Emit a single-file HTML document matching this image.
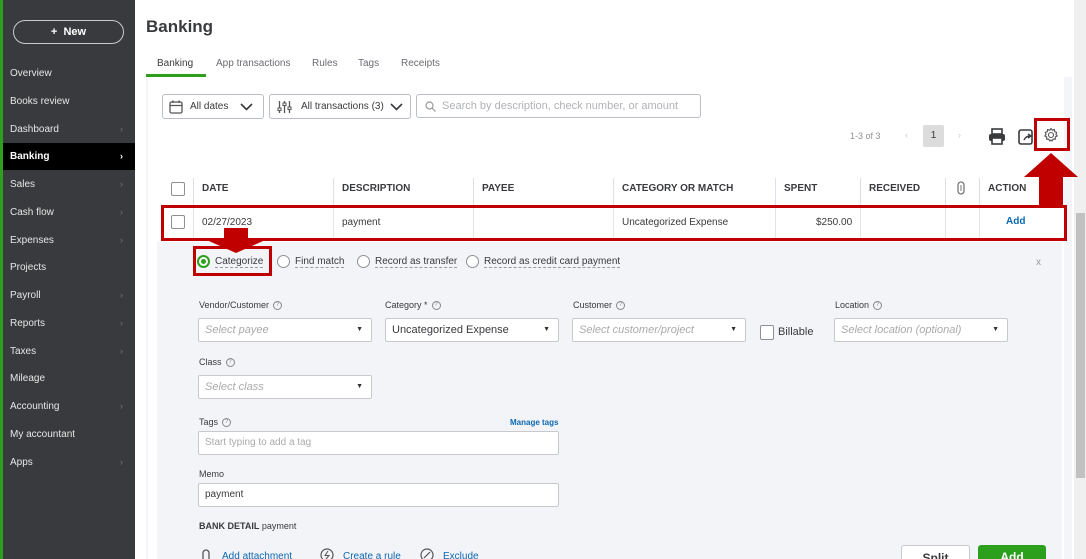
<!DOCTYPE html>
<html><head><meta charset="utf-8"><style>
*{box-sizing:border-box;margin:0;padding:0}
html,body{width:1086px;height:559px;overflow:hidden}
body{font-family:"Liberation Sans",sans-serif;background:#fff;position:relative;color:#393a3d}
.abs{position:absolute}
#side{left:0;top:0;width:135px;height:559px;background:#393a3d;border-left:3px solid #2ca01c}
#side .new{position:absolute;left:10px;top:20px;width:111px;height:24px;border:1px solid #c9cacc;border-radius:14px;color:#fff;font-size:11px;font-weight:bold;text-align:center;line-height:22px}
.nav{position:absolute;left:0;width:132px;height:27px;line-height:27px;padding-left:7px;font-size:10px;color:#e6e6e6}
.nav .ch{position:absolute;right:12px;top:0;color:#777;font-size:9px}
.nav.act{background:#000;color:#fff;font-weight:bold}
.nav.act .ch{color:#fff}
.t{position:absolute;white-space:nowrap}
.box{position:absolute;border:1px solid #babec5;border-radius:3px;background:#fff}
.lbl{font-size:9px;color:#393a3d}
.q{display:inline-block;width:9px;height:9px;border:1px solid #888;border-radius:50%;font-size:6px;text-align:center;line-height:7px;color:#888;margin-left:4px;vertical-align:middle}
.inp{position:absolute;height:24px;background:#fff;border:1px solid #c7c9cd;border-radius:2px;font-size:11px;line-height:22px;padding-left:6px}
.ph{color:#aaa;font-style:italic}
.dd{position:absolute;right:8px;top:0;font-size:7px;color:#333}
.red{position:absolute;border:3px solid #c00000}
.radio{display:inline-block;width:13px;height:13px;border:1px solid #8d9096;border-radius:50%;background:#fff;vertical-align:middle;margin-right:5px}
.rl{font-size:10px;color:#393a3d;border-bottom:1px dashed #999;vertical-align:middle}
.th{position:absolute;top:178px;height:28px;line-height:22px;font-size:10px;font-weight:bold;color:#393a3d;padding-left:8px;border-left:1px solid #dde}
</style></head><body>
<div id="side" class="abs">
<div class="new">+&nbsp; New</div>
<div class="nav" style="top:60px">Overview</div>
<div class="nav" style="top:88px">Books review</div>
<div class="nav" style="top:116px">Dashboard<span class="ch">›</span></div>
<div class="nav act" style="top:143px">Banking<span class="ch">›</span></div>
<div class="nav" style="top:171px">Sales<span class="ch">›</span></div>
<div class="nav" style="top:199px">Cash flow<span class="ch">›</span></div>
<div class="nav" style="top:227px">Expenses<span class="ch">›</span></div>
<div class="nav" style="top:254px">Projects</div>
<div class="nav" style="top:282px">Payroll<span class="ch">›</span></div>
<div class="nav" style="top:310px">Reports<span class="ch">›</span></div>
<div class="nav" style="top:338px">Taxes<span class="ch">›</span></div>
<div class="nav" style="top:365px">Mileage</div>
<div class="nav" style="top:393px">Accounting<span class="ch">›</span></div>
<div class="nav" style="top:421px">My accountant</div>
<div class="nav" style="top:449px">Apps<span class="ch">›</span></div>
</div>

<div class="t" style="left:146px;top:17px;font-size:17px;font-weight:bold;color:#393a3d">Banking</div>
<div class="t" style="left:157px;top:58px;font-size:10px;color:#393a3d">Banking</div>
<div class="abs" style="left:146px;top:74px;width:60px;height:3px;background:#2ca01c"></div>
<div class="t" style="left:216px;top:58px;font-size:10px;color:#6b6c72">App transactions</div>
<div class="t" style="left:312px;top:58px;font-size:10px;color:#6b6c72">Rules</div>
<div class="t" style="left:358px;top:58px;font-size:10px;color:#6b6c72">Tags</div>
<div class="t" style="left:401px;top:58px;font-size:10px;color:#6b6c72">Receipts</div>
<div class="abs" style="left:146px;top:77px;width:926px;height:482px;background:#f4f5f8"></div>
<div class="abs" style="left:148px;top:77px;width:916px;height:482px;background:#fff"></div>

<div class="box" style="left:162px;top:94px;width:102px;height:25px">
<svg class="abs" style="left:6px;top:5px" width="14" height="14" viewBox="0 0 14 14"><rect x="1" y="2" width="12" height="11" rx="1.5" fill="none" stroke="#555" stroke-width="1.3"/><path d="M1 5.5H13M4 0.5V3M10 0.5V3" stroke="#555" stroke-width="1.3"/></svg>
<span class="t" style="left:27px;top:6px;font-size:10px">All dates</span>
<svg class="abs" style="left:77px;top:8px" width="13" height="8"><path d="M1 1L6.5 6.5L12 1" fill="none" stroke="#393a3d" stroke-width="1.6"/></svg></div>
<div class="box" style="left:269px;top:94px;width:142px;height:25px">
<svg class="abs" style="left:7px;top:5px" width="15" height="14" viewBox="0 0 15 14"><path d="M2.5 1V13M7.5 1V13M12.5 1V13" stroke="#555" stroke-width="1.3"/><rect x="1" y="8" width="3" height="2.5" fill="#fff" stroke="#555"/><rect x="6" y="3" width="3" height="2.5" fill="#fff" stroke="#555"/><rect x="11" y="7" width="3" height="2.5" fill="#fff" stroke="#555"/></svg>
<span class="t" style="left:31px;top:6px;font-size:10px">All transactions (3)</span>
<svg class="abs" style="left:120px;top:8px" width="13" height="8"><path d="M1 1L6.5 6.5L12 1" fill="none" stroke="#393a3d" stroke-width="1.6"/></svg></div>
<div class="box" style="left:416px;top:94px;width:285px;height:24px">
<svg class="abs" style="left:8px;top:6px" width="11" height="11"><circle cx="4.5" cy="4.5" r="3.5" fill="none" stroke="#999" stroke-width="1.2"/><path d="M7 7L10.5 10.5" stroke="#999" stroke-width="1.2"/></svg>
<span class="t" style="left:25px;top:5px;font-size:11px;color:#b0b2b6">Search by description, check number, or amount</span></div>

<div class="t" style="left:850px;top:131px;font-size:9px;color:#8d9096">1-3 of 3</div>
<div class="t" style="left:905px;top:130px;font-size:9px;color:#ccc">‹</div>
<div class="abs" style="left:923px;top:125px;width:21px;height:22px;background:#dcdcdc;border-radius:2px;font-size:10px;text-align:center;line-height:22px">1</div>
<div class="t" style="left:958px;top:130px;font-size:9px;color:#ccc">›</div>
<svg class="abs" style="left:988px;top:128px" width="18" height="17" viewBox="0 0 18 17"><rect x="4" y="1" width="10" height="5" fill="none" stroke="#393a3d" stroke-width="1.6"/><rect x="1" y="6" width="16" height="7" rx="2" fill="#393a3d"/><rect x="4" y="10" width="10" height="6" fill="#fff" stroke="#393a3d" stroke-width="1.6"/></svg>
<svg class="abs" style="left:1018px;top:128px" width="16" height="17" viewBox="0 0 16 17"><rect x="1" y="2" width="13" height="14" rx="2" fill="none" stroke="#393a3d" stroke-width="1.6"/><path d="M6 12 Q8 8 12 8 M10 6 l3 2 -3 2" fill="none" stroke="#393a3d" stroke-width="1.4"/></svg>
<svg class="abs" style="left:1043px;top:127px" width="16" height="16" viewBox="0 0 16 16"><circle cx="8" cy="8" r="2.5" fill="none" stroke="#555" stroke-width="1.1"/><path d="M8 1.5 L9.3 3.2 L11.4 2.6 L11.7 4.7 L13.7 5.4 L12.9 7.4 L14.2 9 L12.3 10 L12.3 12.2 L10.2 12.1 L9 13.9 L8 13 L6.9 14 L5.7 12.1 L3.6 12.2 L3.7 10 L1.8 9 L3.1 7.4 L2.3 5.4 L4.3 4.7 L4.6 2.6 L6.7 3.2 Z" fill="none" stroke="#555" stroke-width="1.1"/></svg>

<div class="abs" style="left:171px;top:182px;width:14px;height:14px;border:1px solid #8d9096;border-radius:2px;background:#fff"></div>
<div class="th" style="left:193px">DATE</div>
<div class="th" style="left:333px">DESCRIPTION</div>
<div class="th" style="left:473px">PAYEE</div>
<div class="th" style="left:613px">CATEGORY OR MATCH</div>
<div class="th" style="left:775px">SPENT</div>
<div class="th" style="left:860px">RECEIVED</div>
<div class="th" style="left:945px;width:34px"><svg class="abs" style="left:11px;top:3px" width="8" height="14"><rect x="1" y="1" width="6" height="12" rx="3" fill="none" stroke="#777" stroke-width="1.3"/><path d="M4 4V10" stroke="#777"/></svg></div>
<div class="th" style="left:979px">ACTION</div>
<div class="abs" style="left:162px;top:206px;width:902px;height:1px;background:#dcdde0"></div>
<div class="abs" style="left:171px;top:215px;width:14px;height:14px;border:1px solid #8d9096;border-radius:2px;background:#fff"></div>
<div class="abs" style="left:193px;top:207px;width:1px;height:32px;background:#e3e4e6"></div>
<div class="abs" style="left:333px;top:207px;width:1px;height:32px;background:#e3e4e6"></div>
<div class="abs" style="left:473px;top:207px;width:1px;height:32px;background:#e3e4e6"></div>
<div class="abs" style="left:613px;top:207px;width:1px;height:32px;background:#e3e4e6"></div>
<div class="abs" style="left:775px;top:207px;width:1px;height:32px;background:#e3e4e6"></div>
<div class="abs" style="left:860px;top:207px;width:1px;height:32px;background:#e3e4e6"></div>
<div class="abs" style="left:945px;top:207px;width:1px;height:32px;background:#e3e4e6"></div>
<div class="abs" style="left:979px;top:207px;width:1px;height:32px;background:#e3e4e6"></div>
<div class="t" style="left:202px;top:217px;font-size:10px">02/27/2023</div>
<div class="t" style="left:342px;top:217px;font-size:10px">payment</div>
<div class="t" style="left:622px;top:217px;font-size:10px">Uncategorized Expense</div>
<div class="t" style="left:816px;top:217px;font-size:10px">$250.00</div>
<div class="t" style="left:1006px;top:216px;font-size:10px;font-weight:bold;color:#0b68b4">Add</div>
<div class="red" style="left:161px;top:205px;width:906px;height:36px"></div>

<div class="abs" style="left:157px;top:242px;width:905px;height:317px;background:#f3f4f7"></div>
<div class="abs" style="left:197px;top:253px"><span class="radio" style="border:2px solid #2ca01c;position:relative"><span style="position:absolute;left:2px;top:2px;width:5px;height:5px;border-radius:50%;background:#2ca01c"></span></span><span class="rl">Categorize</span></div>
<div class="abs" style="left:277px;top:253px"><span class="radio"></span><span class="rl">Find match</span></div>
<div class="abs" style="left:357px;top:253px"><span class="radio"></span><span class="rl">Record as transfer</span></div>
<div class="abs" style="left:466px;top:253px"><span class="radio"></span><span class="rl">Record as credit card payment</span></div>
<div class="t" style="left:1036px;top:257px;font-size:10px;color:#999">x</div>
<div class="red" style="left:193px;top:246px;width:79px;height:30px"></div>
<svg class="abs" style="left:201px;top:228px" width="70" height="26"><polygon points="23,0 47,0 47,10 69,10 35,25 1,10 23,10" fill="#c00000"/></svg>

<div class="t lbl" style="left:199px;top:300px">Vendor/Customer<span class="q">?</span></div>
<div class="t lbl" style="left:385px;top:300px">Category *<span class="q">?</span></div>
<div class="t lbl" style="left:573px;top:300px">Customer<span class="q">?</span></div>
<div class="t lbl" style="left:835px;top:300px">Location<span class="q">?</span></div>
<div class="inp" style="left:198px;top:318px;width:174px"><span class="ph">Select payee</span><span class="dd">▼</span></div>
<div class="inp" style="left:385px;top:318px;width:174px">Uncategorized Expense<span class="dd">▼</span></div>
<div class="inp" style="left:572px;top:318px;width:174px"><span class="ph">Select customer/project</span><span class="dd">▼</span></div>
<div class="abs" style="left:760px;top:325px;width:14px;height:15px;border:1px solid #8d9096;border-radius:2px;background:#fff"></div>
<div class="t" style="left:778px;top:326px;font-size:11px">Billable</div>
<div class="inp" style="left:834px;top:318px;width:174px"><span class="ph">Select location (optional)</span><span class="dd">▼</span></div>
<div class="t lbl" style="left:199px;top:357px">Class<span class="q">?</span></div>
<div class="inp" style="left:198px;top:375px;width:174px"><span class="ph">Select class</span><span class="dd">▼</span></div>
<div class="t lbl" style="left:199px;top:417px">Tags<span class="q">?</span></div>
<div class="t" style="left:510px;top:418px;font-size:8px;color:#0b68b4;font-weight:bold">Manage tags</div>
<div class="inp" style="left:198px;top:431px;width:361px;font-size:10px;color:#aaa">Start typing to add a tag</div>
<div class="t lbl" style="left:199px;top:469px">Memo</div>
<div class="inp" style="left:198px;top:483px;width:361px;font-size:10px">payment</div>
<div class="t" style="left:199px;top:521px;font-size:9px"><b>BANK DETAIL</b> payment</div>
<svg class="abs" style="left:202px;top:549px" width="8" height="14"><rect x="1" y="1" width="6" height="12" rx="3" fill="none" stroke="#555" stroke-width="1.3"/></svg>
<div class="t" style="left:222px;top:551px;font-size:10px;color:#0b68b4">Add attachment</div>
<svg class="abs" style="left:320px;top:548px" width="14" height="14"><circle cx="7" cy="7" r="6" fill="none" stroke="#555" stroke-width="1.2"/><path d="M8 3L5 7.5H9L6 11" fill="none" stroke="#555"/></svg>
<div class="t" style="left:343px;top:551px;font-size:10px;color:#0b68b4">Create a rule</div>
<svg class="abs" style="left:420px;top:548px" width="14" height="14"><circle cx="7" cy="7" r="6" fill="none" stroke="#555" stroke-width="1.2"/><path d="M4 10L10 4" stroke="#555" stroke-width="1.2"/></svg>
<div class="t" style="left:443px;top:551px;font-size:10px;color:#0b68b4">Exclude</div>
<div class="abs" style="left:901px;top:545px;width:69px;height:24px;border:1px solid #c7c9cd;border-radius:3px;background:#fff;text-align:center;font-size:12px;line-height:24px;font-weight:bold">Split</div>
<div class="abs" style="left:978px;top:545px;width:68px;height:24px;border-radius:3px;background:#2ca01c;color:#fff;text-align:center;font-size:12px;line-height:24px;font-weight:bold">Add</div>

<div class="abs" style="left:1074px;top:0;width:12px;height:559px;background:#f0f0f0"></div>
<div class="abs" style="left:1076px;top:213px;width:9px;height:265px;background:#c1c1c1"></div>
<div class="red" style="left:1034px;top:118px;width:36px;height:33px"></div>
<svg class="abs" style="left:1023px;top:153px" width="56" height="52"><polygon points="28,0 55,24 40,24 40,52 16,52 16,24 1,24" fill="#c00000"/></svg>
</body></html>
